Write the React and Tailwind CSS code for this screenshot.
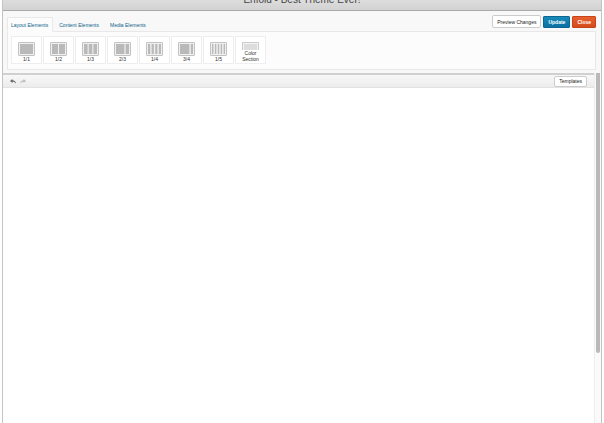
import { useState } from 'react';
import clsx from 'clsx';

const TABS = ['Layout Elements', 'Content Elements', 'Media Elements'];

/* column blocks as [x, width] inside a 17x14 icon */
const LAYOUTS = [
  { label: '1/1', cols: [[2, 13]] },
  { label: '1/2', cols: [[2, 6], [9, 6]] },
  { label: '1/3', cols: [[2, 3.6], [6.7, 3.6], [11.4, 3.6]] },
  { label: '2/3', cols: [[2, 8.4], [11.6, 3.4]] },
  { label: '1/4', cols: [[2, 2.2], [5.6, 2.2], [9.2, 2.2], [12.8, 2.2]] },
  { label: '3/4', cols: [[2, 9.4], [12.8, 2.2]] },
  { label: '1/5', cols: [[2, 1.4], [4.9, 1.4], [7.8, 1.4], [10.7, 1.4], [13.6, 1.4]] },
];

function ColumnIcon({ cols }) {
  return (
    <svg width="17" height="14" viewBox="0 0 17 14" aria-hidden="true">
      <rect x="0.5" y="0.5" width="16" height="13" rx="0.5" fill="#f0f0f0" stroke="#c2c2c2" />
      {cols.map(([x, w]) => (
        <rect key={x} x={x} y="2" width={w} height="10" fill="#b9b9b9" />
      ))}
    </svg>
  );
}

function SectionIcon() {
  return (
    <svg width="17" height="8" viewBox="0 0 17 8" aria-hidden="true">
      <path d="M0.5 8V0.5H16.5V8" fill="#f3f3f3" stroke="#cccccc" />
      <rect x="2" y="2" width="13" height="6" fill="#dddddd" />
    </svg>
  );
}

function ArrowIcon() {
  return (
    <svg width="6" height="5" viewBox="0 0 12 10" fill="currentColor" aria-hidden="true">
      <path d="M5 0L0 4L5 8V5.4C8 5.2 10 6.3 12 9.6C11.6 5.4 9.2 2.8 5 2.6Z" />
    </svg>
  );
}

function Tile({ children }) {
  return (
    <button className="flex h-7 w-[31px] flex-col items-center border border-[#eeeeee] bg-white pt-[5px] text-[5px] leading-[6px] text-[#333333]">
      {children}
    </button>
  );
}

export default function App() {
  const [active, setActive] = useState(TABS[0]);

  return (
    <div className="h-screen overflow-hidden bg-white px-0.5 font-['Liberation_Sans',Arial,sans-serif]">
      <div className="flex h-full flex-col border-x border-[#c4c4c4]">

        {/* Title bar */}
        <header className="flex h-[11px] shrink-0 items-end justify-center overflow-hidden border-b border-[#aaaaaa] bg-linear-to-b from-[#dddddd] to-[#d2d2d2] pb-1">
          <h1 className="text-[10px] leading-3 text-[#444444]">Enfold - Best Theme Ever!</h1>
        </header>

        {/* Element picker */}
        <section className="shrink-0 bg-[#f8f8f8] pt-1 pr-[5px] pb-[3px] pl-1">
          <div className="flex items-end justify-between">
            <div role="tablist" className="flex gap-0.5">
              {TABS.map((tab) => (
                <button
                  key={tab}
                  role="tab"
                  aria-selected={tab === active}
                  onClick={() => setActive(tab)}
                  className={clsx(
                    'relative -mb-px h-[15px] border pr-1 pl-[3px] text-[5px] leading-[12px] text-[#0f638a]',
                    tab === active ? 'z-10 border-[#e8e8e8] border-b-[#fcfcfc] bg-[#fcfcfc]' : 'border-transparent',
                  )}
                >
                  {tab}
                </button>
              ))}
            </div>
            <div className="flex items-center gap-0.5 pb-[3px] text-[5px] leading-[10px]">
              <button className="h-[13px] rounded-xs border border-[#cccccc] bg-white px-1 text-[#222222]">Preview Changes</button>
              <button className="h-3 rounded-[1px] border border-[#0d6592] bg-linear-to-b from-[#168bb9] to-[#0b70a1] px-1 font-bold text-white">Update</button>
              <button className="h-3 rounded-[1px] border border-[#c7441a] bg-linear-to-b from-[#e8602e] to-[#d54b1d] px-1 font-bold text-white">Close</button>
            </div>
          </div>
          <div className="flex gap-px border border-[#e8e8e8] bg-[#fcfcfc] px-[3px] pt-1 pb-[5px]">
            {LAYOUTS.map(({ label, cols }) => (
              <Tile key={label}>
                <ColumnIcon cols={cols} />
                <span>{label}</span>
              </Tile>
            ))}
            <Tile>
              <SectionIcon />
              <span>Color<br />Section</span>
            </Tile>
          </div>
        </section>

        {/* Canvas with its scrollbar */}
        <main className="flex min-h-0 flex-1">
          <div className="flex-1">
            <div className="flex h-[15px] items-center justify-between border-t-2 border-b border-t-[#d0d0d0] border-b-[#e2e2e2] bg-linear-to-b from-[#f8f8f8] to-[#ececec] pr-[7px] pl-[7px]">
              <div className="flex gap-1">
                <button aria-label="Undo" className="text-[#666666]"><ArrowIcon /></button>
                <button aria-label="Redo" className="-scale-x-100 text-[#bbbbbb]"><ArrowIcon /></button>
              </div>
              <button className="h-[11px] rounded-xs border border-[#cccccc] bg-white px-1 text-[5px] leading-[9px] text-[#222222]">Templates</button>
            </div>
          </div>
          <div className="w-[7px] border-l border-[#eeeeee] bg-[#fafafa] pl-px">
            <div className="h-4/5 w-1 rounded-b-xs bg-[#b9b9b9]" />
          </div>
        </main>
      </div>
    </div>
  );
}
